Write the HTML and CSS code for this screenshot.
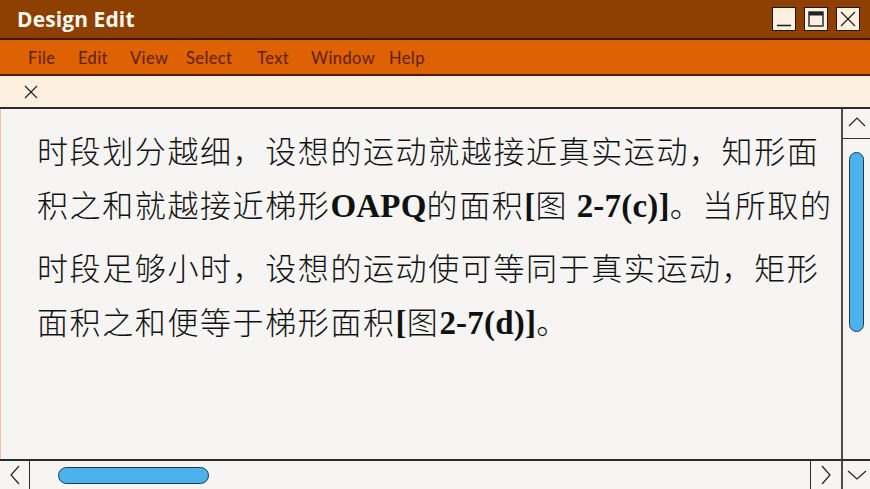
FILE: index.html
```html
<!DOCTYPE html>
<html lang="zh">
<head>
<meta charset="utf-8">
<title>Design Edit</title>
<link rel="stylesheet" href="styles.css">
</head>
<body>
<div class="app">
  <header class="titlebar">
    <span class="title">Design Edit</span>
    <div class="winbtns">
      <span class="wbtn"><svg viewBox="0 0 22 22" width="22" height="22"><line x1="4" y1="17.5" x2="18" y2="17.5" stroke="#222" stroke-width="1.6"/></svg></span>
      <span class="wbtn"><svg viewBox="0 0 22 22" width="22" height="22"><rect x="4" y="4" width="14" height="14" fill="none" stroke="#222" stroke-width="1.4"/><rect x="4" y="4" width="14" height="3.5" fill="#222"/></svg></span>
      <span class="wbtn"><svg viewBox="0 0 22 22" width="22" height="22"><path d="M4 4 L18 18 M18 4 L4 18" stroke="#222" stroke-width="1.3" fill="none"/></svg></span>
    </div>
  </header>
  <nav class="menubar">
    <span class="mi">File</span>
    <span class="mi">Edit</span>
    <span class="mi">View</span>
    <span class="mi">Select</span>
    <span class="mi">Text</span>
    <span class="mi">Window</span>
    <span class="mi">Help</span>
  </nav>
  <div class="tabbar">
    <svg class="tabx" viewBox="0 0 14 14" width="14" height="14"><path d="M1 1 L13 13 M13 1 L1 13" stroke="#222" stroke-width="1.2" fill="none"/></svg>
  </div>
  <main class="workarea">
    <section class="content">
      <div class="para">
        <div class="line">时段划分越细，设想的运动就越接近真实运动，知形面</div>
        <div class="line">积之和就越接近梯形<b class="lat">OAPQ</b>的面积<b class="lat">[</b>图 <b class="lat">2-7(c)]</b>。当所取的</div>
      </div>
      <div class="para second">
        <div class="line">时段足够小时，设想的运动使可等同于真实运动，矩形</div>
        <div class="line">面积之和便等于梯形面积<b class="lat">[</b>图<b class="lat">2-7(d)]</b>。</div>
      </div>
    </section>
    <aside class="vscroll">
      <div class="arrowcell up"><svg viewBox="0 0 20 12" width="20" height="12"><path d="M2 10 L10 2 L18 10" stroke="#222" stroke-width="1.2" fill="none"/></svg></div>
      <div class="vtrack"><div class="vthumb"></div></div>
    </aside>
    <div class="hscroll">
      <div class="hcell left"><svg viewBox="0 0 12 22" width="12" height="22"><path d="M10 2 L2 11 L10 20" stroke="#222" stroke-width="1.2" fill="none"/></svg></div>
      <div class="htrack"><div class="hthumb"></div></div>
      <div class="hcell right"><svg viewBox="0 0 12 22" width="12" height="22"><path d="M2 2 L10 11 L2 20" stroke="#222" stroke-width="1.2" fill="none"/></svg></div>
    </div>
    <div class="corner"><svg viewBox="0 0 22 12" width="22" height="12"><path d="M2 2 L11 10 L20 2" stroke="#222" stroke-width="1.2" fill="none"/></svg></div>
  </main>
</div>
</body>
</html>
```
FILE: styles.css
```css
* { box-sizing: border-box; }
html, body { margin: 0; padding: 0; }
body {
  width: 870px;
  height: 489px;
  overflow: hidden;
  background: #f6f5f3;
  font-family: "Noto Sans", "Liberation Sans", sans-serif;
}
.app {
  width: 870px;
  height: 489px;
  display: flex;
  flex-direction: column;
}
.titlebar {
  height: 40px;
  background: #8e3f02;
  border-bottom: 2px solid #3a1a05;
  display: flex;
  align-items: center;
  justify-content: space-between;
  padding: 0 10px 0 17px;
}
.title {
  color: #fff8ee;
  font-family: "Open Sans", "Noto Sans", sans-serif;
  font-weight: 700;
  font-size: 21px;
  letter-spacing: 0.1px;
}
.winbtns {
  display: flex;
  gap: 8px;
  margin-top: -1px;
}
.wbtn {
  width: 24px;
  height: 24px;
  background: #fdf0e1;
  border: 1px solid #2a1508;
  display: flex;
  align-items: center;
  justify-content: center;
}
.menubar {
  height: 36px;
  background: #de6102;
  border-bottom: 2px solid #4a1e05;
  display: flex;
  align-items: center;
  padding-left: 28px;
  padding-top: 1px;
}
.mi {
  color: #5a1f06;
  font-family: "Lato", "Noto Sans", sans-serif;
  font-size: 16.5px;
  letter-spacing: 0.4px;
}
.mi:nth-child(1) { width: 50px; }
.mi:nth-child(2) { width: 52px; }
.mi:nth-child(3) { width: 56px; }
.mi:nth-child(4) { width: 71px; }
.mi:nth-child(5) { width: 54px; }
.mi:nth-child(6) { width: 78px; }
.tabbar {
  height: 33px;
  background: #fdf0e1;
  border-bottom: 2px solid #2c2c2c;
  display: flex;
  align-items: center;
  padding-left: 24px;
}
.tabx { margin-top: 1px; }
.workarea {
  flex: 1;
  display: grid;
  grid-template-columns: 1fr 29px;
  grid-template-rows: 1fr 30px;
  min-height: 0;
}
.content {
  background: #f6f5f3;
  border-left: 1px solid #e6c8a8;
  padding: 14px 0 0 36px;
  overflow: hidden;
  color: #111;
  font-family: "Noto Sans CJK SC", "Liberation Serif", sans-serif;
  font-size: 31px;
  font-weight: 300;
}
.line {
  height: 54px;
  line-height: 54px;
  white-space: nowrap;
  letter-spacing: 1.6px;
}
.para.second { margin-top: 9px; }
.lat {
  font-family: "Liberation Serif", serif;
  font-weight: 700;
  font-size: 33px;
  letter-spacing: 0.2px;
}
.vscroll {
  border-left: 2px solid #4a4a4a;
  display: flex;
  flex-direction: column;
  background: #f6f5f3;
}
.arrowcell.up {
  height: 30px;
  border-bottom: 1.5px solid #333;
  display: flex;
  align-items: center;
  justify-content: center;
  padding-bottom: 4px;
}
.vtrack {
  flex: 1;
  padding: 13px 0 0 6px;
}
.vthumb {
  width: 15px;
  height: 180px;
  background: #4bb2ee;
  border: 1.5px solid #1f3a4d;
  border-radius: 8px;
}
.hscroll {
  border-top: 2px solid #2a2a2a;
  display: flex;
  align-items: stretch;
}
.hcell {
  width: 30px;
  display: flex;
  align-items: center;
  justify-content: center;
}
.hcell.left { border-right: 1.5px solid #2a2a2a; }
.hcell.right { border-left: 1.5px solid #2a2a2a; width: 31px; }
.htrack {
  flex: 1;
  display: flex;
  align-items: center;
  padding-left: 28px;
}
.hthumb {
  width: 151px;
  height: 17px;
  background: #4bb2ee;
  border: 1.5px solid #1f3a4d;
  border-radius: 9px;
  margin-top: 1px;
}
.corner {
  border-top: 2px solid #2a2a2a;
  border-left: 2px solid #4a4a4a;
  display: flex;
  align-items: center;
  justify-content: center;
}
```
